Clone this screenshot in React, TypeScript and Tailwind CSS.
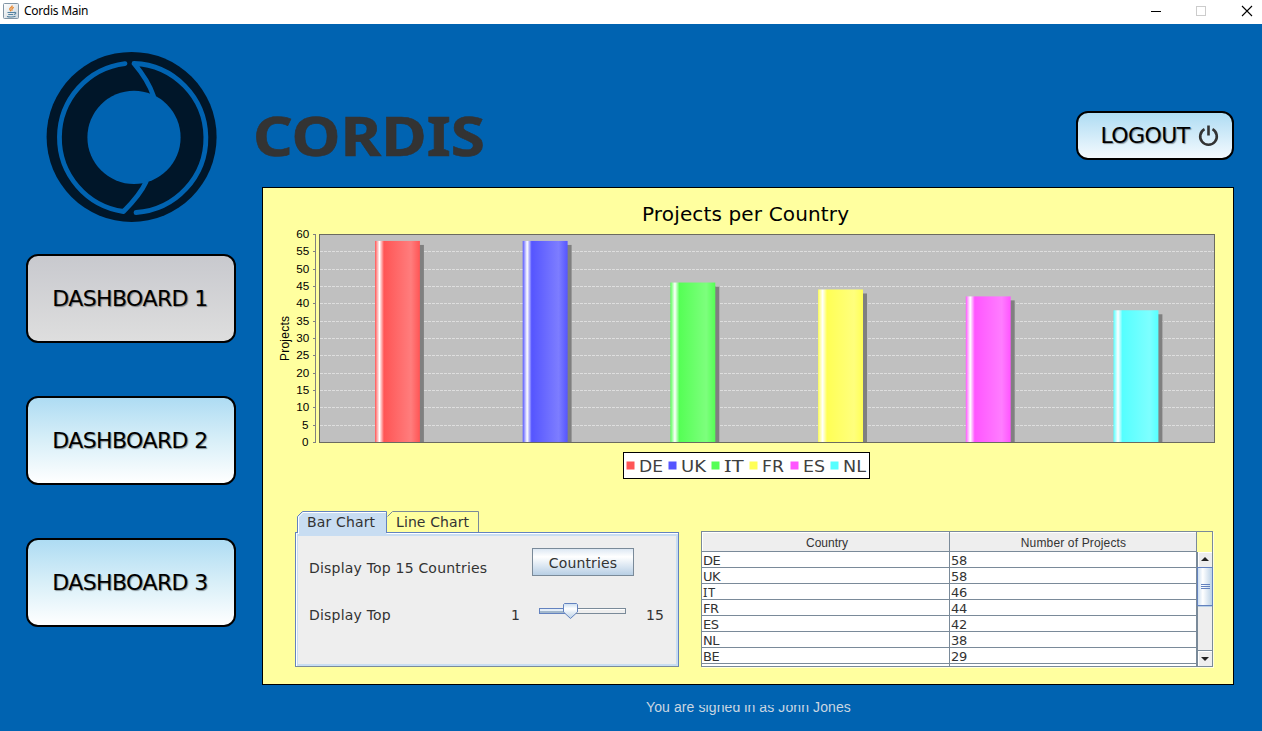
import type { ReactNode } from "react";

const bars = [
  { name: "DE", value: 58, color: "#ff5555", light: "#ff7d7d", lx: 639, lw: 24, sq: 626.5 },
  { name: "UK", value: 58, color: "#5555ff", light: "#7d7dff", lx: 681, lw: 25, sq: 668.5 },
  { name: "IT", value: 46, color: "#55ff55", light: "#7dff7d", lx: 724, lw: 20, sq: 711.5 },
  { name: "FR", value: 44, color: "#ffff55", light: "#ffff7d", lx: 762, lw: 22, sq: 749.5 },
  { name: "ES", value: 42, color: "#ff55ff", light: "#ff7dff", lx: 803, lw: 22, sq: 790.5 },
  { name: "NL", value: 38, color: "#55ffff", light: "#7dffff", lx: 843, lw: 23, sq: 830.5 },
];

const rows: [string, number][] = [
  ["DE", 58], ["UK", 58], ["IT", 46], ["FR", 44], ["ES", 42], ["NL", 38], ["BE", 29],
];

const yOf = (v: number) => 442.5 - (v * 208) / 60;

function JavaIcon() {
  return (
    <svg width="16" height="16" viewBox="0 0 16 16" fill="none">
      <defs>
        <linearGradient id="jb" x1="0" y1="0" x2="1" y2="1">
          <stop offset="0" stopColor="#ffffff" />
          <stop offset="1" stopColor="#ccd5dc" />
        </linearGradient>
      </defs>
      <rect x="0.5" y="0.5" width="15" height="15" rx="1" fill="url(#jb)" stroke="#8295a5" />
      <path d="M9.200 2.500C9.500 4.500 6.200 4.700 6.800 6.300c.3 1 1 1 .8 2M10.800 4.300C9 5 8.300 6 9.300 7.700" stroke="#e8862e" strokeWidth="1.300" />
      <path d="M4.500 9.500h6.500M5.200 11.500h5M11 9.500c2.500-.8 2.500 1.500 0 2M4 13.500c2 .7 6.500.7 8.500-.3" stroke="#5382a1" strokeWidth="1.100" />
    </svg>
  );
}

function TitleBar() {
  return (
    <div className="flex h-6 shrink-0 items-start bg-white pl-[3px] pt-[3px]">
      <JavaIcon />
      <span className="ml-[5px] text-[12px] leading-4 text-black font-['Noto_Sans','Liberation_Sans',sans-serif] tracking-[-0.25px]">
        Cordis Main
      </span>
      <svg className="ml-auto" width="120" height="18" viewBox="1142 3 120 18" shapeRendering="crispEdges">
        <path d="M1151 11.500h10" stroke="#000" />
        <rect x="1196.500" y="6.500" width="9" height="9" fill="none" stroke="#ccc" />
        <path d="M1242 6l10 10M1252 6l-10 10" stroke="#000" shapeRendering="auto" strokeWidth="1.100" />
      </svg>
    </div>
  );
}

function Logo() {
  return (
    <svg className="ml-[46px] mt-7 shrink-0 overflow-visible" width="171" height="171" viewBox="46 52 171 171" fill="none">
      <circle cx="131.600" cy="136.900" r="85" fill="#001629" />
      <circle cx="134" cy="137.400" r="46.600" fill="#0063b1" />
      <g stroke="#0063b1" strokeWidth="4.800" strokeLinecap="round" strokeLinejoin="round">
        <path d="M125 63.600A74.600 74.600 0 0 0 123.500 211.500C132 203 140.500 194 146 182" />
        <path d="M136 212.500A74.600 74.600 0 0 0 134 63.500C143 74 149 83 153.500 96" />
      </g>
    </svg>
  );
}

function NavButton({ children, active }: { children: ReactNode; active?: boolean }) {
  return (
    <button
      className={
        "flex h-[89px] w-[210px] shrink-0 items-center justify-center rounded-[12px] border-2 border-black bg-linear-to-b pr-[2px] text-[22px] tracking-[-0.6px] text-black whitespace-nowrap font-['DejaVu_Sans',sans-serif] [text-shadow:1px_1px_1px_#0006] " +
        (active ? "from-[#c8c9ce] to-[#dedede]" : "from-[#aedcf3] via-[#d8eff8] to-white")
      }
    >
      {children}
    </button>
  );
}

function Chart() {
  const ticks = Array.from({ length: 13 }, (_, i) => i * 5);
  return (
    <svg className="block shrink-0" width="970" height="303" viewBox="263 188 970 303">
      <defs>
        {bars.map((b) => (
          <linearGradient key={b.name} id={"g" + b.name}>
            <stop offset="0" stopColor={b.color} />
            <stop offset="0.1" stopColor="#fff" />
            <stop offset="0.2" stopColor={b.color} />
            <stop offset="0.8" stopColor={b.light} />
            <stop offset="1" stopColor={b.color} />
          </linearGradient>
        ))}
      </defs>
      <text x="642" y="221" fontSize="20" textLength="207" fontFamily="DejaVu Sans" fill="#000">Projects per Country</text>
      <rect x="319.500" y="234.500" width="895" height="208" fill="#c0c0c0" />
      {ticks.slice(1, -1).map((t) => (
        <path key={t} d={`M320 ${Math.round(yOf(t) - 0.5) + 0.5}H1214`} stroke="#dedede" strokeDasharray="3 1" />
      ))}
      {bars.map((b, i) => {
        const x = 375 + i * 147.700;
        return (
          <g key={b.name}>
            <rect x={x + 4} y={yOf(b.value) + 3.500} width="44.900" height={439 - yOf(b.value)} fill="#808080" />
            <rect x={x} y={yOf(b.value) - 0.5} width="44.900" height={443 - yOf(b.value)} fill={`url(#g${b.name})`} />
          </g>
        );
      })}
      <rect x="319.500" y="234.500" width="895" height="208" fill="none" stroke="#6b6b60" />
      <path d="M315.500 234V443" stroke="#808080" />
      {ticks.map((t) => (
        <g key={t}>
          <path d={`M313 ${Math.round(yOf(t) - 0.5) + 0.5}h2`} stroke="#808080" />
          <text x={t < 10 ? 302 : 296.200} y={Math.round(yOf(t) - 0.5) + 4} fontSize="10.500" fontFamily="Liberation Sans" fill="#000" textLength={t < 10 ? 6.500 : 13} lengthAdjust="spacingAndGlyphs">{t}</text>
        </g>
      ))}
      <text transform="translate(289 361) rotate(-90)" fontSize="12" textLength="45" fontFamily="Liberation Sans" fill="#000">Projects</text>
      <rect x="623.500" y="452.500" width="246" height="26" fill="#fff" stroke="#000" />
      {bars.map((b) => (
        <g key={b.name}>
          <rect x={b.sq} y="461.500" width="8" height="8" fill={b.color} />
          <text x={b.lx} y="472" fontSize={b.name === "IT" ? "17" : "16.500"} textLength={b.lw} lengthAdjust="spacingAndGlyphs" fontFamily={b.name === "IT" ? "Noto Sans" : "DejaVu Sans"} fill="#404040">{b.name}</text>
        </g>
      ))}
    </svg>
  );
}

function Controls() {
  return (
    <div className="mt-5 flex h-[156px] w-[384px] shrink-0 flex-col text-[14px] text-[#333] font-['DejaVu_Sans',sans-serif]">
      <div className="z-10 -mb-[3px] ml-[2px] flex h-6 shrink-0 items-start">
        <div className="relative flex h-6 w-[90px] items-start pl-[10px] tracking-[0.15px]">
          <svg className="absolute inset-0" width="90" height="24">
            <path d="M0.500 23V5.500L5.500 0.500H89.500V23Z" fill="#c8ddf2" />
            <path d="M0.500 22V5.500L5.500 0.500H89.500V22" fill="none" stroke="#6382bf" />
            <path d="M1.500 23V6L6 1.500H89" fill="none" stroke="#fff" />
          </svg>
          <span className="relative leading-[22px]">Bar Chart</span>
        </div>
        <div className="relative flex h-[22px] w-[92px] items-start pl-[9px] tracking-[0.1px]">
          <svg className="absolute inset-0" width="92" height="22">
            <path d="M0.500 5.500L5.500 0.500H91.500V21" fill="none" stroke="#7a8a99" />
          </svg>
          <span className="relative leading-[22px]">Line Chart</span>
        </div>
      </div>
      <div className="flex flex-1 flex-col border border-[#6382bf] border-b-[#7a8a99] bg-[#eee] shadow-[inset_1px_1px_0_#fff,inset_-2px_-2px_0_#c8ddf2,inset_2px_3px_0_#c8ddf2]">
        <div className="mt-[15px] flex h-7 items-start pl-[13px]">
          <span className="mt-[10px] w-[223px] tracking-[0.2px] leading-5">Display Top 15 Countries</span>
          <button className="flex h-7 w-[102px] items-center justify-center border border-[#7a8a99] bg-linear-to-b from-[#dde8f3] via-white via-30% to-[#b8cfe5] pt-[2px] tracking-[0.15px]">
            Countries
          </button>
        </div>
        <div className="mt-[27px] flex h-6 items-center pl-[13px] leading-6">
          <span className="w-[202px] tracking-[0.2px]">Display Top</span>
          <span className="w-[28px]">1</span>
          <svg className="-mt-[7px] block" width="88" height="17" viewBox="0 0 88 17">
            <defs>
              <linearGradient id="thumb" x1="0" y1="0" x2="0" y2="1">
                <stop offset="0" stopColor="#c8dcf0" />
                <stop offset="0.35" stopColor="#fff" />
                <stop offset="1" stopColor="#b8cfe5" />
              </linearGradient>
            </defs>
            <rect x="0.500" y="5.500" width="86" height="5" fill="#eee" stroke="#7a8a99" />
            <path d="M1 6.500H86" stroke="#fff" />
            <rect x="0.500" y="5.500" width="30" height="5" fill="#a3b8cc" stroke="#6382bf" />
            <path d="M1 7H30" stroke="#e4eef8" strokeWidth="2" />
            <path d="M25.500 0.500H37.500L38.500 1.500V9L31.500 15.500L24.500 9V1.500Z" fill="url(#thumb)" stroke="#6382bf" />
          </svg>
          <span className="ml-[19px]">15</span>
        </div>
      </div>
    </div>
  );
}

function CountryTable() {
  return (
    <div className="mt-10 flex h-[136px] w-[512px] shrink-0 text-[13px] text-[#333] shadow-[1px_1px_0_#ffffffb0] font-['DejaVu_Sans',sans-serif]">
      <div className="w-[496px] overflow-hidden border border-[#7a8a99] bg-white">
        <div className="flex h-5 border-b border-[#7a8a99] bg-[#eee] text-center text-[12px] leading-[22px] font-['Liberation_Sans',sans-serif] shadow-[inset_1px_1px_0_#fff]">
          <div className="w-[248px] border-r border-[#7a8a99] pl-[3px]">Country</div>
          <div className="flex-1 pl-[1px] tracking-[0.15px]">Number of Projects</div>
        </div>
        {rows.map(([c, n]) => (
          <div key={c} className="flex h-4 border-b border-[#7a8a99] leading-[18px]">
            <div
              className={
                "w-[248px] border-r border-[#7a8a99] pl-px " +
                (c === "IT" ? "font-['Noto_Sans'] leading-4 tracking-[0.5px]" : "tracking-[-0.5px]")
              }
            >
              {c}
            </div>
            <div className="pl-px tracking-[-0.2px]">{n}</div>
          </div>
        ))}
        <div className="h-[2px] w-[248px] border-r border-[#7a8a99]" />
      </div>
      <div className="flex w-4 flex-col">
        <div className="h-[21px] border-r border-t border-[#7a8a99] bg-[#ffff9f]" />
        <svg className="block" width="16" height="115" viewBox="0 0 16 115">
          <defs>
            <linearGradient id="sb">
              <stop offset="0" stopColor="#c8dcf0" />
              <stop offset="0.350" stopColor="#fff" />
              <stop offset="1" stopColor="#b8cfe5" />
            </linearGradient>
          </defs>
          <rect x="0" y="0" width="16" height="115" fill="#eee" />
          <path d="M0.500 0V115M15.500 0V115M0 114.500H16M1 98.500H15" stroke="#7a8a99" fill="none" />
          <path d="M1.500 0V15M1 0.500H15M1.500 99V114M1 99.500H15" stroke="#fff" />
          <path d="M4 9L8 5L12 9Z" fill="#222" />
          <path d="M4 105L8 109L12 105Z" fill="#222" />
          <rect x="0.500" y="15.500" width="15" height="38" fill="url(#sb)" stroke="#6382bf" />
          <path d="M1 54.500H15" stroke="#b8cfe5" />
          <path d="M4 32.500h9M4 34.500h9M4 36.500h9" stroke="#6382bf" />
        </svg>
      </div>
    </div>
  );
}

export default function App() {
  return (
    <div className="flex h-[731px] w-[1262px] flex-col overflow-hidden bg-[#0063b1]">
      <TitleBar />
      <div className="flex flex-1">
        <aside className="flex w-[254px] shrink-0 flex-col">
          <Logo />
          <nav className="ml-[26px] mt-[31px] flex flex-col gap-[53px]">
            <NavButton active>DASHBOARD 1</NavButton>
            <NavButton>DASHBOARD 2</NavButton>
            <NavButton>DASHBOARD 3</NavButton>
          </nav>
        </aside>
        <main className="flex w-[980px] flex-col">
          <header className="flex h-[163px] shrink-0 items-start justify-between">
            <h1 className="-ml-px mt-[76px] origin-left scale-x-[1.17] text-[53px] leading-[72px] font-bold text-[#333] font-['Noto_Sans',sans-serif] [-webkit-text-stroke:0.6px_#333]">
              CORDIS
            </h1>
            <button className="mt-[87px] flex h-[49px] w-[158px] items-center justify-center rounded-[12px] border-2 border-black bg-linear-to-b from-[#aedcf3] to-[#f4fafe] pl-[9px] text-[22px] tracking-[-0.6px] text-black font-['DejaVu_Sans',sans-serif] [text-shadow:1px_1px_1px_#0006]">
              LOGOUT
              <svg className="ml-2" width="21" height="22" viewBox="0 0 21 22" fill="none" stroke="#333" strokeWidth="2.600">
                <path d="M6.500 4.200A8.300 8.300 0 1 0 14.500 4.200M10.500 0.500V10.500" />
              </svg>
            </button>
          </header>
          <section className="ml-2 flex h-[498px] w-[972px] shrink-0 flex-col border border-black bg-[#ffff9f]">
            <Chart />
            <div className="flex pl-8">
              <Controls />
              <div className="ml-[22px]">
                <CountryTable />
              </div>
            </div>
          </section>
          <footer className="relative ml-[392px] mt-[13px] w-[206px] whitespace-nowrap text-[14px] leading-[18px] tracking-[0.1px] text-[#c9d6e2] font-['Liberation_Sans',sans-serif]">
            You are signed in as John Jones
            <span className="absolute left-[53px] top-0 h-[7px] w-[111px] bg-[#0063b1]" />
          </footer>
        </main>
      </div>
    </div>
  );
}
